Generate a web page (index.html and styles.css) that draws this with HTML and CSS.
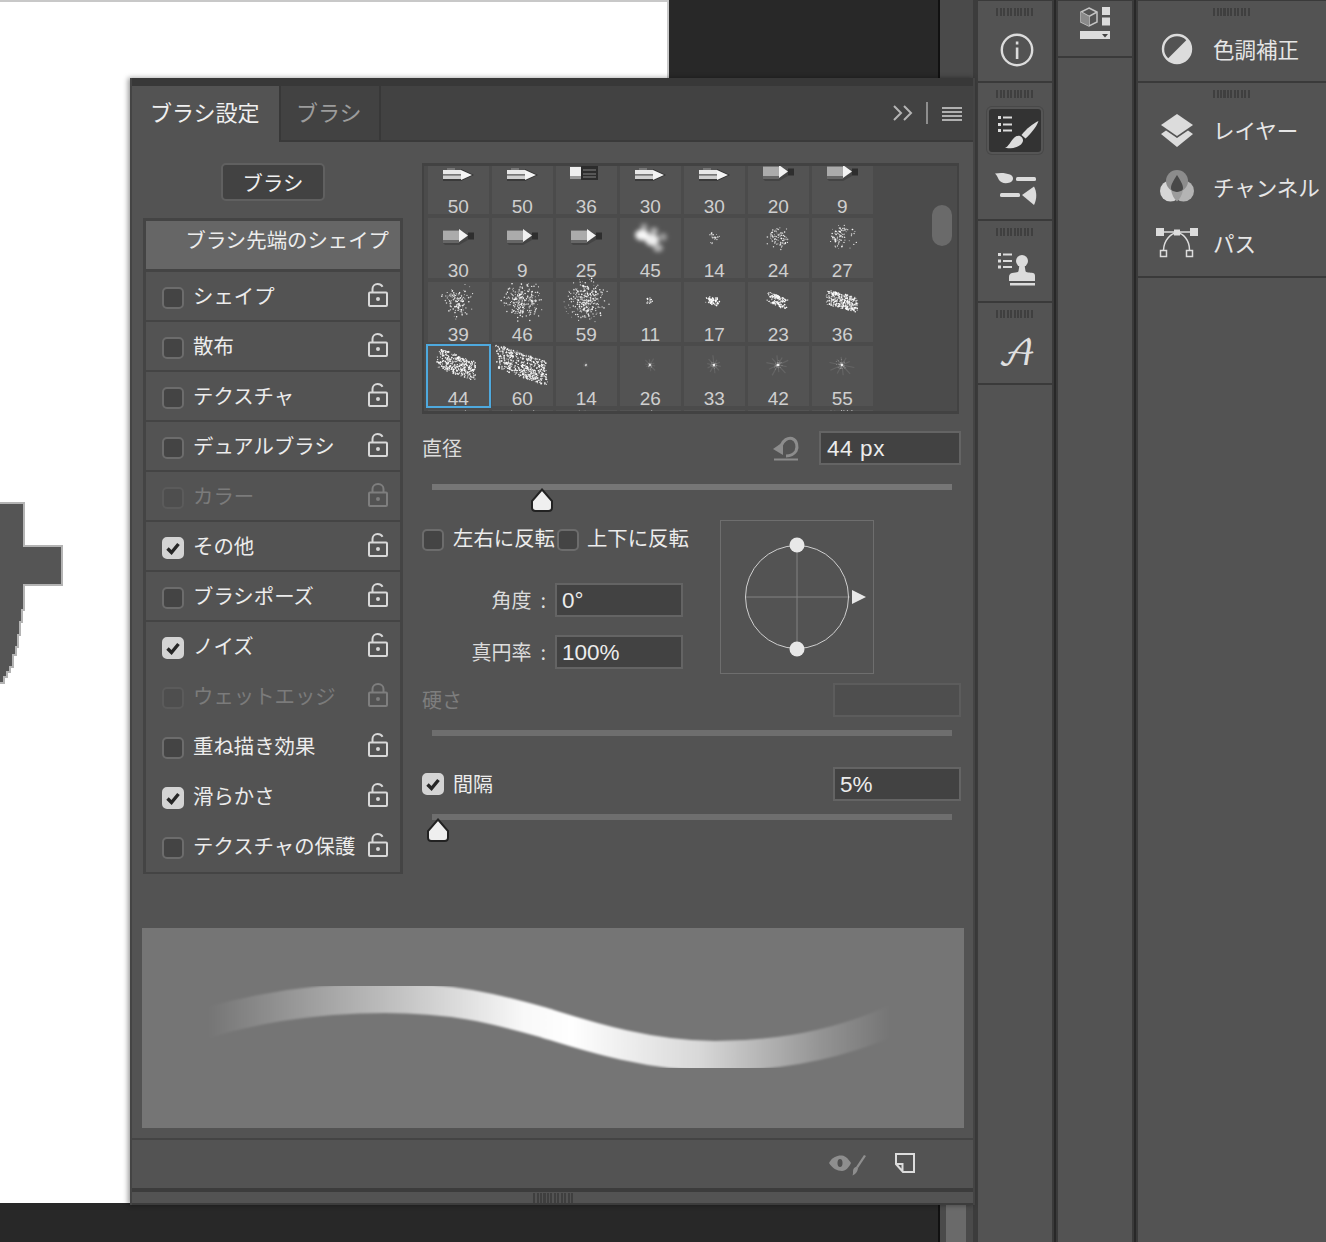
FILE: index.html
```html
<!DOCTYPE html>
<html lang="ja">
<head>
<meta charset="utf-8">
<title>ブラシ設定</title>
<link rel="stylesheet" href="styles.css">
</head>
<body>
<svg class="defs" width="0" height="0" aria-hidden="true">
  <symbol id="lock-open" viewBox="0 0 20 24">
    <rect x="1" y="9.5" width="18" height="13.5" rx="1" fill="none" stroke="currentColor" stroke-width="2"/>
    <path d="M4.5 9V6C4.5 3 6.8 1 9.5 1C11.8 1 13.6 2.2 14.6 3.8" fill="none" stroke="currentColor" stroke-width="2"/>
    <circle cx="10" cy="16" r="2" fill="currentColor"/>
  </symbol>
  <symbol id="lock-closed" viewBox="0 0 20 24">
    <rect x="1" y="9.5" width="18" height="13.5" rx="1" fill="none" stroke="currentColor" stroke-width="2"/>
    <path d="M4.5 9V6C4.5 3 6.8 1 10 1C13.2 1 15.5 3 15.5 6V9" fill="none" stroke="currentColor" stroke-width="2"/>
    <circle cx="10" cy="16" r="2" fill="currentColor"/>
  </symbol>
  <symbol id="check" viewBox="0 0 22 22">
    <path d="M5.5 11.5L9.5 15.5L16.5 7" fill="none" stroke="#262626" stroke-width="3.4"/>
  </symbol>
  <symbol id="thumb" viewBox="0 0 24 24">
    <path d="M12 1.5L22 13V19.5Q22 23 18.5 23H5.5Q2 23 2 19.5V13Z" fill="#efefef" stroke="#222" stroke-width="2"/>
  </symbol>
</svg>

<div class="workspace">
  <main class="stage">
    <div class="document">
      <svg class="doc-glyph" width="70" height="190" viewBox="0 500 70 190">
        <path d="M-2 503H24V546H62V585H24V610H22V622H20V635H18V647H16V655H13V667H10V672H7V677H4V683H-2Z" fill="#555" stroke="#b4b4b4" stroke-width="2" shape-rendering="crispEdges"/>
      </svg>
    </div>
  </main>

  <div class="gutter"><div class="gutter-thumb"></div></div>

  <aside class="dock-col dock-icons">
    <section class="dock-group g82">
      <div class="grip"></div>
      <div class="icon-slot">
        <svg width="40" height="36" viewBox="995 31 40 36">
          <circle cx="1017" cy="50" r="15.2" fill="none" stroke="#dcdcdc" stroke-width="2.4"/>
          <rect x="1015.8" y="47.5" width="2.6" height="11.5" fill="#dcdcdc"/>
          <rect x="1015.8" y="41.5" width="2.6" height="3" fill="#dcdcdc"/>
        </svg>
      </div>
    </section>
    <section class="dock-group g138">
      <div class="grip"></div>
      <div class="tool-btn selected">
        <svg width="52" height="43" viewBox="989 108 52 43" fill="#dcdcdc">
          <path d="M998 115h3v3h-3zM998 122h3v3h-3zM998 128h3v3h-3zM1003 115.500h9v2h-9zM1003 122.500h9v2h-9zM1003 128.500h9v2h-9z"/>
          <path d="M1038.500 120C1036.500 126 1030.500 133 1025.500 137.500L1021.500 134C1026 128 1033 122.500 1038.500 120Z"/>
          <path d="M1020 135C1023 136.500 1024.500 140 1021 143.500C1017 147 1010 147.500 1005 147C1009 145 1010 141 1013 138C1015 135.500 1018 134 1020 135Z"/>
        </svg>
      </div>
      <div class="tool-btn">
        <svg width="50" height="36" viewBox="990 171 50 36" fill="#dcdcdc">
          <path d="M995 173.500C1001 172.500 1006 173 1010 174.500C1014 176 1014 181 1010 182.500C1005 184 1001 183 999 180C998 178 997 175.500 995 173.500Z"/>
          <rect x="1016" y="177" width="20" height="4" rx="1.500"/>
          <rect x="1000" y="193" width="20" height="4" rx="1.500"/>
          <path d="M1022 195L1034 186.500C1037 192 1037 199 1034 205Z"/>
        </svg>
      </div>
    </section>
    <section class="dock-group g82">
      <div class="grip"></div>
      <div class="icon-slot">
        <svg width="46" height="38" viewBox="992 250 46 38" fill="#dcdcdc">
          <path d="M998 253h3v3h-3zM998 259.500h3v3h-3zM998 265.500h3v3h-3zM1003 253.500h9v2h-9zM1003 260h9v2h-9zM1003 266h9v2h-9z"/>
          <circle cx="1022" cy="261" r="6"/>
          <path d="M1019.500 265H1024.500L1025.500 271C1025.500 272.500 1030 272.500 1033 273C1035 273.500 1035 275 1035 277V281H1009V277C1009 275 1010 273.500 1012 273C1015 272.500 1018.500 272.500 1018.500 271Z"/>
          <rect x="1010" y="283" width="25" height="2.500"/>
        </svg>
      </div>
    </section>
    <section class="dock-group g82">
      <div class="grip"></div>
      <div class="icon-slot"><span class="script-a">𝒜</span></div>
    </section>
  </aside>

  <aside class="dock-col dock-mid">
    <section class="dock-group g57">
      <svg class="cube-icon" width="32" height="34" viewBox="1081 6 32 34">
        <path d="M1091 8L1099 12V22L1091 26L1083 22V12Z" fill="none" stroke="#c4c4c4" stroke-width="1.500"/>
        <path d="M1083 12L1091 16.500L1099 12M1091 16.500V26" fill="none" stroke="#c4c4c4" stroke-width="1.500"/>
        <path d="M1091 16.500L1083 12V22L1091 26Z" fill="#8a8a8a"/>
        <rect x="1104" y="7" width="8" height="8" fill="#dcdcdc"/>
        <rect x="1104" y="17.500" width="8" height="8" fill="#dcdcdc"/>
        <rect x="1082" y="31" width="30" height="8" fill="#dcdcdc"/>
        <path d="M1104 34H1110L1107 37.500Z" fill="#444"/>
      </svg>
    </section>
  </aside>

  <aside class="dock-col dock-panels">
    <section class="dock-group g82">
      <div class="grip"></div>
      <div class="named-row first">
        <svg class="named-icon" width="44" height="36" viewBox="1155 32 44 36">
          <circle cx="1177" cy="50" r="14" fill="none" stroke="#dcdcdc" stroke-width="2.400"/>
          <path d="M1167.500 60L1187 40.500C1192 46 1192 54 1187 59.500C1181.500 65 1173 65 1167.500 60Z" fill="#dcdcdc"/>
        </svg>
        <span>色調補正</span>
      </div>
    </section>
    <section class="dock-group g195">
      <div class="grip"></div>
      <div class="named-row">
        <svg class="named-icon" width="44" height="40" viewBox="1155 110 44 40" fill="#dcdcdc">
          <path d="M1161 125L1177 114L1193 125L1177 136Z"/>
          <path d="M1161 134L1166 130.500L1177 138L1188 130.500L1193 134L1177 147Z"/>
        </svg>
        <span>レイヤー</span>
      </div>
      <div class="named-row">
        <svg class="named-icon" width="44" height="40" viewBox="1155 167 44 40">
          <circle cx="1170.500" cy="191" r="10.500" fill="#d6d6d6"/>
          <circle cx="1183.500" cy="191" r="10.500" fill="#b4b4b4"/>
          <circle cx="1177" cy="181" r="11" fill="#8c8c8c"/>
          <path d="M1177 175C1180 180 1183 184 1183 188C1183 191 1180 192 1177 192C1174 192 1171 191 1171 188C1171 184 1174 180 1177 175Z" fill="#484848"/>
          <path d="M1171 190C1172 195 1174 199 1177 201.500C1180 199 1182 195 1183 190C1180 192.500 1174 192.500 1171 190Z" fill="#9c9c9c"/>
        </svg>
        <span>チャンネル</span>
      </div>
      <div class="named-row">
        <svg class="named-icon" width="44" height="32" viewBox="1155 227 44 32">
          <path d="M1160 232H1194M1163.500 250C1164 240 1171 233 1177 233C1183 233 1189.500 240 1189.500 250" fill="none" stroke="#dcdcdc" stroke-width="1.500"/>
          <path d="M1156 228h8v8h-8zM1174 229.500h6v6h-6zM1190 228h8v8h-8z" fill="#dcdcdc"/>
          <path d="M1160.500 250.500h6v6h-6zM1186.500 250.500h6v6h-6z" fill="none" stroke="#dcdcdc" stroke-width="1.500"/>
        </svg>
        <span>パス</span>
      </div>
    </section>
  </aside>

  <article class="panel">
    <div class="panel-title"></div>
    <header class="tabs">
      <div class="tab active">ブラシ設定</div>
      <div class="tab">ブラシ</div>
      <div class="tab-fill">
        <svg width="72" height="24" viewBox="0 0 72 24">
          <path d="M2 5L9 12L2 19M12 5L19 12L12 19" fill="none" stroke="#b4b4b4" stroke-width="2"/>
          <rect x="34" y="1" width="2" height="22" fill="#8e8e8e"/>
          <path d="M50 6h20v2h-20zM50 10h20v2h-20zM50 14h20v2h-20zM50 18h20v2h-20z" fill="#b0b0b0"/>
        </svg>
      </div>
    </header>

    <div class="panel-main">
      <div class="settings">
        <div class="options">
          <button class="brush-btn" type="button">ブラシ</button>
          <ul class="option-list">
            <li class="option head">ブラシ先端のシェイプ</li>
            <li class="option ruled"><span class="check"></span><span class="name">シェイプ</span><svg class="lock"><use href="#lock-open"/></svg></li>
            <li class="option ruled"><span class="check"></span><span class="name">散布</span><svg class="lock"><use href="#lock-open"/></svg></li>
            <li class="option ruled"><span class="check"></span><span class="name">テクスチャ</span><svg class="lock"><use href="#lock-open"/></svg></li>
            <li class="option ruled"><span class="check"></span><span class="name">デュアルブラシ</span><svg class="lock"><use href="#lock-open"/></svg></li>
            <li class="option ruled off"><span class="check"></span><span class="name">カラー</span><svg class="lock"><use href="#lock-closed"/></svg></li>
            <li class="option ruled"><span class="check on"><svg><use href="#check"/></svg></span><span class="name">その他</span><svg class="lock"><use href="#lock-open"/></svg></li>
            <li class="option ruled"><span class="check"></span><span class="name">ブラシポーズ</span><svg class="lock"><use href="#lock-open"/></svg></li>
            <li class="option"><span class="check on"><svg><use href="#check"/></svg></span><span class="name">ノイズ</span><svg class="lock"><use href="#lock-open"/></svg></li>
            <li class="option off"><span class="check"></span><span class="name">ウェットエッジ</span><svg class="lock"><use href="#lock-closed"/></svg></li>
            <li class="option"><span class="check"></span><span class="name">重ね描き効果</span><svg class="lock"><use href="#lock-open"/></svg></li>
            <li class="option"><span class="check on"><svg><use href="#check"/></svg></span><span class="name">滑らかさ</span><svg class="lock"><use href="#lock-open"/></svg></li>
            <li class="option"><span class="check"></span><span class="name">テクスチャの保護</span><svg class="lock"><use href="#lock-open"/></svg></li>
          </ul>
        </div>

        <div class="controls">
          <div class="tip-box">
            <div class="tip-grid" id="tipGrid"></div>
            <div class="tip-scroll"></div>
          </div>

          <div class="value-row diameter">
            <span class="label">直径</span>
            <svg class="reset" width="28" height="26" viewBox="772 435 28 26">
              <path d="M773 449L783 442V455Z" fill="#8c8c8c"/>
              <path d="M781 446C783 440 788 437.500 792 438.500C797 440 798 447 796 451C794 454 790 456 786 456" fill="none" stroke="#8c8c8c" stroke-width="3"/>
              <rect x="774" y="458.500" width="24" height="2" fill="#8c8c8c"/>
            </svg>
            <div class="field wide">44 px</div>
          </div>
          <div class="slider s-diameter">
            <div class="track"></div>
            <svg class="thumb" style="left:98px"><use href="#thumb"/></svg>
          </div>

          <div class="shape-area">
            <div class="shape-fields">
              <div class="flip-row">
                <span class="check"></span><span class="flip-name">左右に反転</span>
                <span class="check second"></span><span class="flip-name">上下に反転</span>
              </div>
              <div class="param-row angle"><span class="param-label">角度  :</span><div class="field mid">0°</div></div>
              <div class="param-row round"><span class="param-label">真円率  :</span><div class="field mid">100%</div></div>
            </div>
            <svg class="angle-widget" width="154" height="154" viewBox="720 520 154 154">
              <rect x="720.500" y="520.500" width="153" height="153" fill="none" stroke="#6e6e6e"/>
              <path d="M745 597H850M797 545V649" stroke="#838383" stroke-width="1"/>
              <circle cx="797" cy="597" r="51.500" fill="none" stroke="#cfcfcf" stroke-width="1"/>
              <circle cx="797" cy="545" r="7.500" fill="#e8e8e8"/>
              <circle cx="797" cy="649" r="7.500" fill="#e8e8e8"/>
              <path d="M852 590L866 597L852 604Z" fill="#e8e8e8"/>
            </svg>
          </div>

          <div class="value-row hardness">
            <span class="label muted">硬さ</span>
            <div class="field narrow blank"></div>
          </div>
          <div class="slider s-hardness"><div class="track dim"></div></div>

          <div class="value-row spacing">
            <span class="check on"><svg><use href="#check"/></svg></span>
            <span class="label tight">間隔</span>
            <div class="field narrow">5%</div>
          </div>
          <div class="slider s-spacing">
            <div class="track dim"></div>
            <svg class="thumb" style="left:-6px"><use href="#thumb"/></svg>
          </div>
        </div>
      </div>

      <div class="preview">
        <svg width="822" height="200" viewBox="0 0 822 200">
          <defs>
            <linearGradient id="strokeFade" gradientUnits="userSpaceOnUse" x1="66" y1="0" x2="748" y2="0">
              <stop offset="0" stop-color="#fff" stop-opacity="0"/>
              <stop offset=".1" stop-color="#fff" stop-opacity=".2"/>
              <stop offset=".28" stop-color="#fff" stop-opacity=".56"/>
              <stop offset=".46" stop-color="#fff" stop-opacity=".95"/>
              <stop offset=".53" stop-color="#fff" stop-opacity="1"/>
              <stop offset=".72" stop-color="#fff" stop-opacity=".72"/>
              <stop offset=".9" stop-color="#fff" stop-opacity=".22"/>
              <stop offset="1" stop-color="#fff" stop-opacity="0"/>
            </linearGradient>
            <filter id="soft" x="-5%" y="-20%" width="110%" height="140%"><feGaussianBlur stdDeviation=".8"/></filter>
          </defs>
          <g filter="url(#soft)" fill="none">
            <path d="M60 96C120 78 185 70 243 70C310 70 350 80 400 94C430 103 500 128 573 128C650 128 710 112 760 88" stroke="url(#strokeFade)" stroke-width="30"/>
          </g>
        </svg>
      </div>
    </div>

    <footer class="panel-foot">
      <svg width="90" height="24" viewBox="826 1152 90 24">
        <path d="M829 1163C832 1157 838 1155 842 1155.500C846 1156 849 1160 851 1163C849 1167 846 1171 842 1171C837 1171 832 1168 829 1163Z" fill="#8e8e8e"/>
        <ellipse cx="840" cy="1163" rx="2.500" ry="4" fill="#505050"/>
        <path d="M866 1156L858 1168L856 1167L864 1155Z" fill="#8e8e8e"/>
        <path d="M853.500 1169C855 1166.500 857.500 1166.500 858 1168.500C857.500 1172 855 1174.500 852.500 1175.500C853.500 1173 852.500 1171 853.500 1169Z" fill="#8e8e8e"/>
        <path d="M896 1154H914V1172H903L896 1164Z M896 1164H902.500V1172" fill="none" stroke="#dcdcdc" stroke-width="2"/>
      </svg>
    </footer>
    <div class="panel-grip"><div class="grip short"></div></div>
  </article>
</div>
<script src="script.js"></script>
</body>
</html>
```

FILE: styles.css
```css
* { box-sizing: border-box; }
html, body { margin: 0; padding: 0; }
body {
  width: 1326px;
  height: 1242px;
  overflow: hidden;
  background: #282828;
  font-family: "Noto Sans CJK JP", "Liberation Sans", sans-serif;
  color: #e8e8e8;
}
.defs { position: absolute; }

.workspace {
  position: relative;
  display: flex;
  width: 1326px;
  height: 1242px;
  overflow: hidden;
}

/* document area */
.stage {
  position: relative;
  flex: 0 0 938px;
  background: #282828;
}
.document {
  position: absolute;
  left: 0;
  top: 0;
  width: 669px;
  height: 1203px;
  background: #fff;
  border-top: 2px solid #c8c8c8;
  border-right: 2px solid #c8c8c8;
  overflow: hidden;
}
.doc-glyph { position: absolute; left: 0; top: 498px; }

.gutter {
  flex: 0 0 40px;
  display: flex;
  flex-direction: column;
  justify-content: flex-end;
  background: #4a4a4a;
  border-left: 2px solid #111;
  border-right: 5px solid #3c3c3c;
}
.gutter-thumb { width: 20px; height: 60px; margin-left: 6px; background: #6a6a6a; }

/* right dock */
.dock-col {
  display: flex;
  flex-direction: column;
  background: #535353;
  padding-top: 1px;
  box-shadow: inset 0 1px 0 #3a3a3a;
}
.dock-icons { flex: 0 0 76px; border-right: 2px solid #3a3a3a; }
.dock-mid { flex: 0 0 78px; border-left: 2px solid #3a3a3a; border-right: 2px solid #3a3a3a; margin-left: 2px; }
.dock-panels { flex: 1; border-left: 2px solid #3a3a3a; margin-left: 2px; }
.dock-group {
  display: flex;
  flex-direction: column;
  align-items: center;
  border-bottom: 2px solid #3a3a3a;
}
.g82 { height: 82px; }
.g138 { height: 138px; }
.g57 { height: 57px; }
.g195 { height: 195px; }
.grip {
  flex: none;
  width: 38px;
  height: 8px;
  margin-top: 7px;
  background: repeating-linear-gradient(90deg, #3f3f3f 0 2px, transparent 2px 3.5px);
}
.icon-slot {
  flex: 1;
  display: flex;
  align-items: center;
  justify-content: center;
}
.tool-btn {
  display: flex;
  align-items: center;
  justify-content: center;
  width: 56px;
  height: 47px;
  margin-top: 9px;
}
.tool-btn + .tool-btn { margin-top: 11px; }
.tool-btn.selected {
  background: #333;
  border: 2px solid #555;
  border-radius: 5px;
  box-shadow: 0 0 0 1px #484848;
}
.script-a {
  font: 36px/1 "DejaVu Math TeX Gyre", "DejaVu Serif", "Liberation Serif", serif;
  color: #e0e0e0;
  margin: 6px 0 0 4px;
}
.cube-icon { margin-top: 5px; }
.named-row {
  display: flex;
  align-items: center;
  align-self: stretch;
  height: 56.500px;
  font-size: 21.500px;
  line-height: 30px;
  white-space: nowrap;
  color: #e6e6e6;
}
.grip + .named-row { margin-top: 4px; }
.grip + .named-row.first { height: 62px; margin-top: 2px; }
.named-icon { flex: none; margin: 0 14px 0 17px; }

/* floating panel */
.panel {
  position: absolute;
  left: 130px;
  top: 78px;
  width: 845px;
  height: 1127px;
  display: flex;
  flex-direction: column;
  background: #535353;
  border-left: 2px solid #444;
  border-right: 2px solid #444;
  box-shadow: -2px 0 5px rgba(0, 0, 0, .4);
}
.panel-title { flex: 0 0 8px; background: #383838; }
.tabs { flex: 0 0 56px; display: flex; background: #424242; }
.tab {
  padding: 0 19px 0 19px;
  font-size: 22px;
  line-height: 50px;
  color: #f0f0f0;
  white-space: nowrap;
}
.tab.active { width: 147px; padding-left: 18px; background: #535353; }
.tab:not(.active) {
  width: 102px;
  padding-left: 15px;
  color: #9c9c9c;
  border-left: 2px solid #383838;
  border-right: 2px solid #383838;
  border-bottom: 2px solid #3a3a3a;
}
.tab-fill {
  flex: 1;
  display: flex;
  justify-content: flex-end;
  align-items: flex-start;
  padding: 15px 9px 0 0;
  border-bottom: 2px solid #3a3a3a;
}

.panel-main { flex: 1; display: flex; flex-direction: column; min-height: 0; }
.settings { display: flex; gap: 19px; padding: 21px 0 0 11px; }

/* left option list */
.options { flex: 0 0 260px; display: flex; flex-direction: column; align-items: center; }
.brush-btn {
  width: 104px;
  height: 38px;
  padding: 0;
  background: #424242;
  border: 2px solid #606060;
  border-radius: 5px;
  color: #f0f0f0;
  font: 20.400px/28px "Noto Sans CJK JP", sans-serif;
}
.option-list {
  width: 260px;
  margin: 17px 0 0;
  padding: 0;
  list-style: none;
  border: 3px solid #444;
  border-bottom-width: 2px;
}
.option {
  display: flex;
  align-items: center;
  height: 50px;
  padding: 0 12px 0 16px;
  font-size: 20.400px;
  line-height: 28px;
  border-bottom: 2px solid transparent;
  color: #ececec;
  white-space: nowrap;
}
.option.head {
  height: 51px;
  align-items: flex-start;
  justify-content: flex-end;
  padding: 4px 11px 0 0;
  background: #666;
  border-bottom: 3px solid #444;
}
.option.ruled { border-bottom-color: #444; }
.option.off { color: #7b7b7b; }
.name { margin-left: 9px; margin-top: -3px; }
.lock { width: 20px; height: 24px; margin-left: auto; margin-top: -2px; color: #d8d8d8; }
.option.off .lock { color: #7e7e7e; }
.check {
  flex: none;
  display: block;
  width: 22px;
  height: 22px;
  background: #444;
  border: 2px solid #6c6c6c;
  border-radius: 5px;
}
.option .check { margin-top: 3px; }
.check.on { background: #d4d4d4; border-color: #d4d4d4; }
.check.on svg { display: block; width: 22px; height: 22px; margin: -2px; }
.option.off .check { background: #4e4e4e; border-color: #5b5b5b; }

/* right controls */
.controls { flex: 0 0 539px; display: flex; flex-direction: column; }
.tip-box {
  position: relative;
  width: 537px;
  height: 251px;
  background: #4b4b4b;
  border: 3px solid #424242;
  border-width: 3px 2px;
  overflow: hidden;
}
.tip-grid {
  display: grid;
  grid-template-columns: repeat(7, 60.500px);
  grid-auto-rows: 60px;
  column-gap: 3.500px;
  row-gap: 4px;
  margin: -12px 0 0 4px;
}
.tip {
  position: relative;
  background: #535353;
  display: flex;
  flex-direction: column;
  align-items: center;
}
.tip.selected { outline: 2px solid #4ea9de; outline-offset: 0; z-index: 1; }
.tip svg { flex: none; display: block; overflow: visible; }
.tip-num {
  font: 19px/20px "Liberation Sans", sans-serif;
  color: #cfcfcf;
}
.tip-scroll {
  position: absolute;
  left: 508px;
  top: 39px;
  width: 20px;
  height: 41px;
  border-radius: 10px;
  background: #6a6a6a;
}

.value-row { display: flex; align-items: center; width: 539px; height: 34px; }
.label { font-size: 20px; line-height: 28px; color: #dcdcdc; }
.label.muted { color: #7e7e7e; }
.label.tight { margin-left: 9px; color: #ececec; }
.field {
  height: 34px;
  padding: 0 6px 0 5px;
  background: #424242;
  border: 2px solid #646464;
  font: 22.500px/32px "Liberation Sans", sans-serif;
  color: #ececec;
}
.field.wide { width: 142px; padding-left: 6px; letter-spacing: .6px; }
.field.mid { width: 128px; }
.field.narrow { width: 128px; margin-left: auto; }
.field.blank { background: #4e4e4e; border-color: #5c5c5c; }
.diameter { margin-top: 17px; }
.reset { margin-left: auto; margin-right: 19px; }
.slider { position: relative; margin: 0 9px 0 10px; height: 6px; }
.track { height: 6px; background: #767676; }
.track.dim { background: #6e6e6e; }
.thumb { position: absolute; top: 4px; width: 24px; height: 24px; }
.s-diameter { margin-top: 19px; }
.shape-area { display: flex; margin-top: 30px; height: 154px; }
.shape-fields { flex: 0 0 298px; display: flex; flex-direction: column; }
.flip-row {
  display: flex;
  align-items: center;
  margin-top: 9px;
  height: 22px;
  font-size: 20.400px;
  white-space: nowrap;
  color: #ececec;
}
.flip-name { margin-left: 9px; margin-top: -6px; }
.flip-row .check.second { margin-left: 2px; }
.flip-row .second + .flip-name { margin-left: 8px; }
.param-row { display: flex; align-items: center; gap: 9px; height: 34px; }
.param-row.angle { margin-top: 32px; }
.param-row.round { margin-top: 18px; }
.param-label { width: 124px; margin-top: -1px; text-align: right; font-size: 20px; color: #dcdcdc; white-space: pre; }
.angle-widget { flex: none; }
.hardness { margin-top: 9px; }
.s-hardness { margin-top: 13px; }
.spacing { margin-top: 31px; }
.s-spacing { margin-top: 13px; }

.preview {
  flex: none;
  width: 822px;
  height: 200px;
  margin: auto 0 10px 10px;
  background: #757575;
}
.preview svg { display: block; }

.panel-foot {
  flex: 0 0 50px;
  display: flex;
  justify-content: flex-end;
  align-items: flex-start;
  padding: 12px 57px 0 0;
  border-top: 2px solid #444;
}
.panel-grip {
  flex: 0 0 17px;
  display: flex;
  justify-content: center;
  background: #535353;
  border-top: 4px solid #3c3c3c;
  border-bottom: 2px solid #3c3c3c;
}
.grip.short { width: 40px; height: 10px; margin: 1px 0 0 0; }
```

FILE: script.js
```js
// Brush tip presets for the grid: size label and thumbnail kind.
var TIPS = [
  [50,'pen'],[50,'pen'],[36,'flat'],[30,'pen'],[30,'pen'],[20,'marker'],[9,'marker'],
  [30,'marker'],[9,'marker'],[25,'marker'],[45,'blob'],[14,'spray',6,22],[24,'spray',11,70],[27,'spray',13,85],
  [39,'spray',16,130],[46,'spray',19,230],[59,'spray',20,290],[11,'patch',6,3,16,1,20],[17,'patch',12,6,70,1,15],[23,'patch',17,11,130,1,25],[36,'patch',30,15,260,1,15],
  [44,'patch',38,19,340,1,20],[60,'patch',51,23,470,1,20],[14,'burst',3,.5],[26,'burst',7,.7],[33,'burst',9,.75],[42,'burst',11,.8],[55,'burst',12,.8]
];

var seed = 1234567;
function rnd() {
  seed = (seed * 16807) % 2147483647;
  return seed / 2147483647;
}
function gauss() {
  return rnd() + rnd() + rnd() + rnd() - 2;
}
function dot(x, y, r, o) {
  return '<circle cx="' + x.toFixed(1) + '" cy="' + y.toFixed(1) + '" r="' + r.toFixed(2) + '" fill="#fff" fill-opacity="' + o.toFixed(2) + '"/>';
}

var PEN = '<g transform="translate(15 16)">' +
  '<rect x="4" y="-2" width="8" height="2" fill="#777"/>' +
  '<rect x="0" y="0" width="18" height="11" fill="#3a3a3a"/>' +
  '<rect x="0" y="0" width="18" height="4" fill="#e8e8e8"/>' +
  '<rect x="0" y="4" width="18" height="1.500" fill="#777"/>' +
  '<rect x="0" y="5.500" width="18" height="3.500" fill="#cfcfcf"/>' +
  '<path d="M18 -1L31 5L18 11Z" fill="#333"/>' +
  '<path d="M18 0L29 5L18 10Z" fill="#f4f4f4"/></g>';
var MARKER = '<g transform="translate(15 11)">' +
  '<path d="M0 1H16L25 5V11L16 16H2L0 14Z" fill="#444"/>' +
  '<path d="M0 1.500H16V11H0Z" fill="#ababab"/>' +
  '<path d="M0 11H16V14H0Z" fill="#666"/>' +
  '<path d="M16 0L25 6.500L16 13Z" fill="#f2f2f2"/>' +
  '<rect x="25" y="3.500" width="6" height="7" fill="#2e2e2e"/></g>';
var FLAT = '<g transform="translate(14 1)">' +
  '<rect x="0" y="12" width="11" height="9" fill="#eee"/>' +
  '<rect x="0" y="21" width="11" height="3" fill="#999"/>' +
  '<rect x="11" y="11" width="17" height="14" fill="#2c2c2c"/>' +
  '<path d="M13 15H26M13 19H26M13 22H26" stroke="#666" stroke-width="1.500"/></g>';

function spray(spread, count) {
  var s = '';
  for (var i = 0; i < count; i++) {
    var dx = gauss() * spread * .8, dy = gauss() * spread * .8;
    if (dx * dx + dy * dy > spread * spread * 1.4) continue;
    s += dot(30 + dx, 19 + dy, .45 + rnd() * .4, .6 + rnd() * .4);
  }
  return s;
}
function patch(w, h, count, r, angle) {
  var s = '<g transform="rotate(' + angle + ' 30 19)">';
  var bands = Math.max(2, Math.round(h / 5));
  for (var i = 0; i < count; i++) {
    var band = Math.floor(rnd() * bands);
    var x = 30 + (rnd() - .5) * w + (rnd() - .5) * 5 + (band - bands / 2) * 1.5;
    var y = 19 - h / 2 + (band + .5) * (h / bands) + (rnd() - .5) * 4.6;
    s += dot(x, y, r * (.45 + rnd() * .45), .75 + rnd() * .25);
  }
  return s + '</g>';
}
function burst(size, alpha) {
  var s = '';
  for (var a = 0; a < 10; a++) {
    var t = a * Math.PI / 5 + .2;
    var l = size * (.6 + rnd() * .5);
    s += '<line x1="30" y1="19" x2="' + (30 + Math.cos(t) * l).toFixed(1) + '" y2="' + (19 + Math.sin(t) * l).toFixed(1) +
      '" stroke="#fff" stroke-opacity="' + (alpha * .13).toFixed(2) + '" stroke-width="1.200"/>';
  }
  for (var i = 0; i < size * 3; i++) {
    s += dot(30 + gauss() * size * .3, 19 + gauss() * size * .3, .5, alpha * .4);
  }
  return s + dot(30, 19, Math.min(1.6, .6 + size / 16), .85);
}
var BLOB = '<defs><filter id="blobBlur" x="-40%" y="-40%" width="180%" height="180%"><feGaussianBlur stdDeviation="2.100"/></filter></defs>' +
  '<g filter="url(#blobBlur)" fill="#fff"><ellipse cx="22" cy="17" rx="7" ry="5.500" fill-opacity=".95"/>' +
  '<ellipse cx="32" cy="22" rx="7" ry="6" fill-opacity=".9"/><ellipse cx="43" cy="19" rx="4" ry="4" fill-opacity=".4"/>' +
  '<ellipse cx="24" cy="9" rx="3.500" ry="3.500" fill-opacity=".45"/><ellipse cx="34" cy="13" rx="4" ry="3.500" fill-opacity=".55"/><ellipse cx="38" cy="30" rx="5" ry="4" fill-opacity=".55"/></g>';

function thumbnail(t) {
  switch (t[1]) {
    case 'pen': return PEN;
    case 'marker': return MARKER;
    case 'flat': return FLAT;
    case 'blob': return BLOB;
    case 'spray': return spray(t[2], t[3]);
    case 'patch': return patch(t[2], t[3], t[4], t[5], t[6]);
    case 'burst': return burst(t[2], t[3]);
  }
  return '';
}

var html = '';
TIPS.forEach(function (t, i) {
  html += '<div class="tip' + (i === 21 ? ' selected' : '') + '"><svg width="60" height="43" viewBox="0 0 60 43">' +
    thumbnail(t) + '</svg><span class="tip-num">' + t[0] + '</span></div>';
});
for (var c = 0; c < 7; c++) {
  var edge = '';
  for (var d = 0; d < [3, 5, 4, 3, 0, 0, 14][c]; d++) edge += dot(18 + rnd() * 26, .5 + rnd() * 2, .55, .7);
  html += '<div class="tip"><svg width="60" height="43" viewBox="0 0 60 43">' + edge + '</svg></div>';
}
document.getElementById('tipGrid').innerHTML = html;
```
